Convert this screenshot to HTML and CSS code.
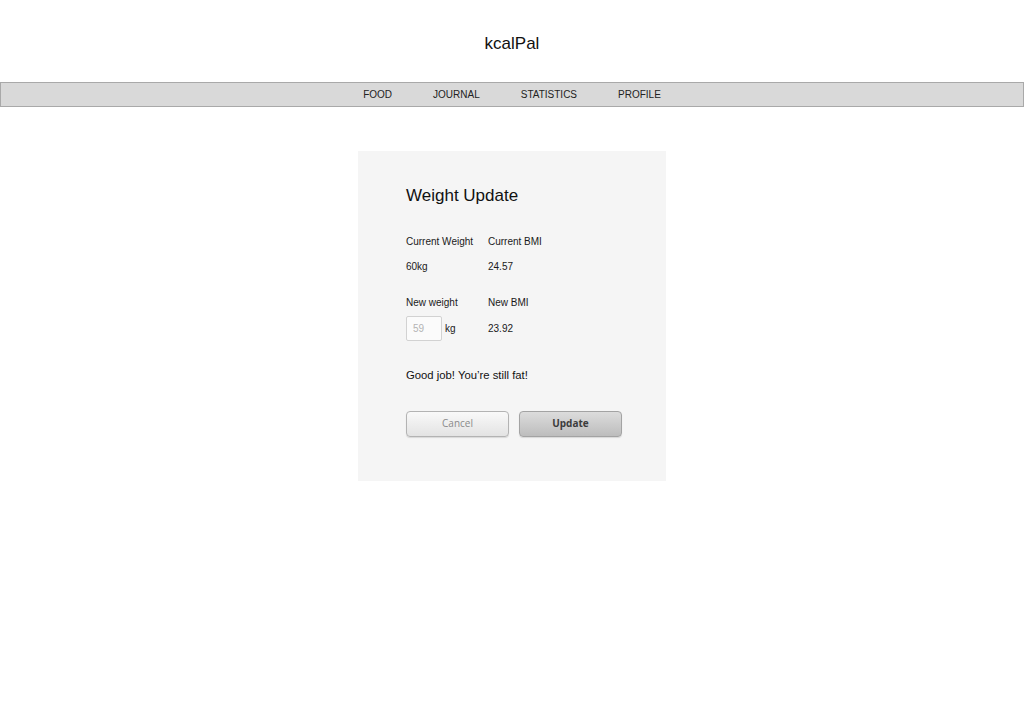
FILE: index.html
```html
<!DOCTYPE html>
<html lang="en">
<head>
<meta charset="utf-8">
<title>kcalPal</title>
<link rel="stylesheet" href="styles.css">
</head>
<body>
<header class="site-header">
  <h1 class="brand">kcalPal</h1>
</header>
<nav class="main-nav">
  <a class="nav-item" href="#">FOOD</a>
  <a class="nav-item" href="#">JOURNAL</a>
  <a class="nav-item" href="#">STATISTICS</a>
  <a class="nav-item" href="#">PROFILE</a>
</nav>
<main class="content">
  <section class="card">
    <h2 class="card-title">Weight Update</h2>
    <div class="stat-row label-row first">
      <span class="cell">Current Weight</span>
      <span class="cell">Current BMI</span>
    </div>
    <div class="stat-row value-row">
      <span class="cell">60kg</span>
      <span class="cell">24.57</span>
    </div>
    <div class="stat-row label-row second">
      <span class="cell">New weight</span>
      <span class="cell">New BMI</span>
    </div>
    <div class="stat-row input-row">
      <span class="cell weight-cell"><input class="weight-input" type="text" placeholder="59"><span class="unit">kg</span></span>
      <span class="cell">23.92</span>
    </div>
    <p class="message">Good job! You’re still fat!</p>
    <div class="actions">
      <button class="btn btn-cancel" type="button">Cancel</button>
      <button class="btn btn-update" type="button">Update</button>
    </div>
  </section>
</main>
</body>
</html>
```

FILE: styles.css
```css
html, body {
  margin: 0;
  padding: 0;
  background: #ffffff;
}

body {
  font-family: "Liberation Sans", Arial, sans-serif;
  color: #1a1a1a;
}

.site-header {
  padding-top: 34px;
  text-align: center;
}

.brand {
  margin: 0;
  font-size: 17px;
  line-height: 20px;
  font-weight: normal;
  color: #111;
}

.main-nav {
  margin-top: 28px;
  height: 23px;
  border: 1px solid #a9a9a9;
  background: #d9d9d9;
  display: flex;
  justify-content: center;
  align-items: center;
  gap: 41px;
}

.nav-item {
  font-size: 10px;
  line-height: 12px;
  color: #222;
  text-decoration: none;
}

.content {
  display: flex;
  justify-content: center;
  padding-top: 44px;
}

.card {
  box-sizing: border-box;
  width: 308px;
  height: 330px;
  background: #f5f5f5;
  padding: 35px 0 0 48px;
}

.card-title {
  margin: 0;
  font-size: 17px;
  line-height: 20px;
  font-weight: normal;
  color: #111;
}

.stat-row {
  display: flex;
  font-size: 10px;
  line-height: 12px;
  color: #1a1a1a;
}

.stat-row .cell {
  width: 82px;
}

.label-row.first {
  margin-top: 30px;
}

.value-row {
  margin-top: 13px;
}

.label-row.second {
  margin-top: 24px;
}

.input-row {
  margin-top: 7px;
  align-items: center;
}

.weight-cell {
  display: flex;
  align-items: center;
}

.weight-input {
  box-sizing: border-box;
  width: 36px;
  height: 25px;
  margin: 0;
  padding: 0 0 0 6px;
  border: 1px solid #d2d2d2;
  border-radius: 2px;
  background: #fbfbfb;
  font-family: "Liberation Sans", Arial, sans-serif;
  font-size: 10px;
  color: #333;
  outline: none;
}

.weight-input::placeholder {
  color: #b4b4b4;
}

.unit {
  margin-left: 3px;
}

.message {
  margin: 27px 0 0;
  font-size: 11.3px;
  line-height: 14px;
  color: #111;
}

.actions {
  margin-top: 29px;
  display: flex;
  gap: 10px;
}

.btn {
  box-sizing: border-box;
  flex: 0 0 103px;
  width: 103px;
  height: 26px;
  margin: 0;
  padding: 0 0 2px;
  border-radius: 4px;
  font-family: "Open Sans", "Liberation Sans", sans-serif;
  font-size: 10px;
  cursor: pointer;
  box-shadow: 0 1px 1px rgba(0, 0, 0, 0.12);
}

.btn-cancel {
  border: 1px solid #b3b3b3;
  background: linear-gradient(#f9f9f9, #e3e3e3);
  color: #8a8a8a;
}

.btn-update {
  border: 1px solid #a3a3a3;
  background: linear-gradient(#dcdcdc, #bdbdbd);
  color: #3c3c3c;
  font-weight: bold;
}
```
